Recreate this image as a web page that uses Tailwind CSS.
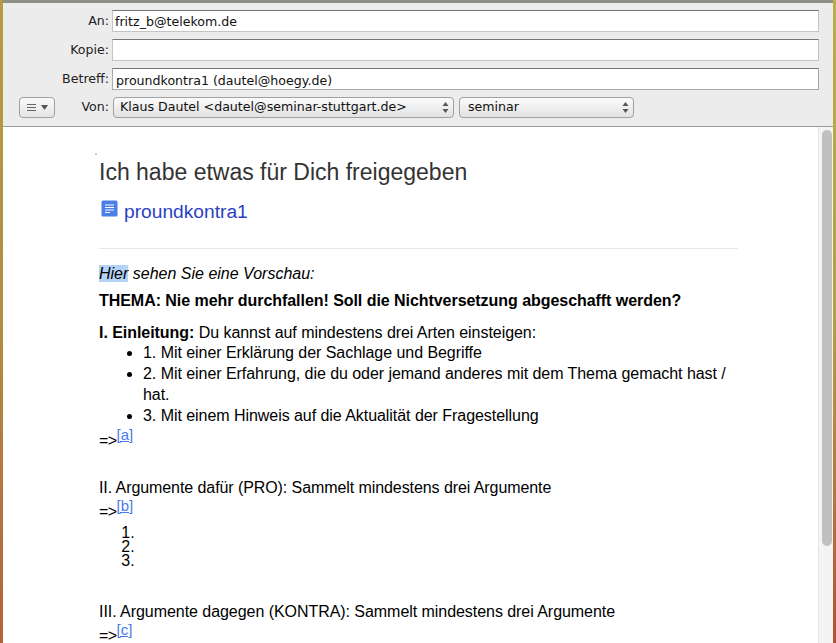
<!doctype html>
<html lang="de"><head><meta charset="utf-8"><title>Mail</title>
<script src="https://cdn.jsdelivr.net/npm/@tailwindcss/browser@4"></script></head>
<body class="w-[836px] h-[643px] overflow-hidden bg-white">
<div class="flex w-[836px] h-[643px] overflow-hidden">
  <div class="w-[3px] shrink-0 bg-gradient-to-b from-[#b79a45] via-[#b08f40] to-[#b5603a]"></div>
  <div class="flex-1 flex flex-col min-w-0 font-['DejaVu_Sans',sans-serif] text-[12.6px] text-[#111]">
    <header class="h-[127px] shrink-0 bg-[#ececec] border-t-[3px] border-b border-t-[#8f8f8a] border-b-[#9a9a9a] pt-[7px] pl-[16px] pr-[14px] flex flex-col">
      <div class="flex items-center h-[22px]">
        <label class="w-[93px] text-right text-[#222] pr-[3px]">An:</label>
        <div class="flex-1 h-[22px] bg-white border border-[#c4c4c4] border-t-[#777] px-[2px] leading-[21px]">fritz_b@telekom.de</div>
      </div>
      <div class="flex items-center h-[22px] mt-[7px]">
        <label class="w-[93px] text-right text-[#222] pr-[3px]">Kopie:</label>
        <div class="flex-1 h-[22px] bg-white border border-[#c4c4c4] border-t-[#777] px-[3px]"></div>
      </div>
      <div class="flex items-center h-[22px] mt-[7px]">
        <label class="w-[93px] text-right text-[#222] pr-[3px]">Betreff:</label>
        <div class="flex-1 h-[22px] bg-white border border-[#a8a8a8] border-t-[#777] px-[3px] leading-[23px]">proundkontra1 (dautel@hoegy.de)</div>
      </div>
      <div class="flex items-center h-[21px] mt-[7px]">
        <button class="w-[36px] h-[21px] rounded-[4px] border border-[#a0a0a0] bg-gradient-to-b from-[#fafafa] to-[#e4e4e4] flex items-center justify-center gap-[5px]">
          <svg width="9" height="7" viewBox="0 0 9 7"><path d="M0 .5h9M0 3.5h9M0 6.5h9" stroke="#666" stroke-width="1"/></svg>
          <svg width="7" height="5" viewBox="0 0 7 5"><path d="M0 0h7L3.5 5z" fill="#555"/></svg>
        </button>
        <label class="w-[57px] text-right text-[#222] pr-[3px]">Von:</label>
        <div class="w-[341px] h-[21px] ml-[1px] rounded-[4px] border border-[#a0a0a0] bg-gradient-to-b from-[#fbfbfb] to-[#e2e2e2] flex items-center justify-between pl-[6px] pr-[4px]">
          <span>Klaus Dautel &lt;dautel@seminar-stuttgart.de&gt;</span>
          <svg width="7" height="11" viewBox="0 0 7 11"><path d="M3.5 0L6.5 4H.5zM3.5 11L.5 7h6z" fill="#555"/></svg>
        </div>
        <div class="w-[175px] h-[21px] ml-[5px] rounded-[4px] border border-[#a0a0a0] bg-gradient-to-b from-[#fbfbfb] to-[#e2e2e2] flex items-center justify-between pl-[8px] pr-[4px]">
          <span>seminar</span>
          <svg width="7" height="11" viewBox="0 0 7 11"><path d="M3.5 0L6.5 4H.5zM3.5 11L.5 7h6z" fill="#555"/></svg>
        </div>
      </div>
    </header>
    <div class="flex-1 flex min-h-0">
      <main class="relative flex-1 min-w-0 overflow-hidden pl-[96px] pr-[80px] pt-[31px] font-['Liberation_Sans',Arial,sans-serif] text-[16px] leading-[21px] tracking-[-0.05px] text-black">
        <span class="absolute left-[92px] top-[26px] w-[2px] h-[2px] bg-[#cfcfcf]"></span>
        <h1 class="text-[23px] leading-[28px] tracking-normal text-[#333]">Ich habe etwas für Dich freigegeben</h1>
        <div class="flex items-start mt-[14px] h-[26px]">
          <svg class="ml-[2px]" width="17" height="17" viewBox="0 0 17 17"><rect x=".5" y=".5" width="16" height="16" rx="1.5" fill="#4a7ee8"/><path d="M4 5h9M4 7.5h9M4 10h9M4 12.5h5" stroke="#fff" stroke-width="1"/></svg>
          <a class="ml-[6px] text-[19.2px] leading-[24px] tracking-normal text-[#2a3fc4]">proundkontra1</a>
        </div>
        <hr class="mt-[22px] border-t border-[#e8e8e8]">
        <p class="mt-[14px] italic tracking-normal"><span class="bg-[#b4d3f7]">Hier</span> sehen Sie eine Vorschau:</p>
        <p class="mt-[6px] font-bold">THEMA: Nie mehr durchfallen! Soll die Nichtversetzung abgeschafft werden?</p>
        <p class="mt-[11px]"><b>I. Einleitung:</b> Du kannst auf mindestens drei Arten einsteigen:</p>
        <ul class="list-disc pl-[44px] -mt-[1px]">
          <li>1. Mit einer Erklärung der Sachlage und Begriffe</li>
          <li>2. Mit einer Erfahrung, die du oder jemand anderes mit dem Thema gemacht hast / hat.</li>
          <li>3. Mit einem Hinweis auf die Aktualität der Fragestellung</li>
        </ul>
        <p class="h-[24px] mt-[4px] tracking-[-0.6px]">=&gt;<sup class="text-[15px] tracking-normal text-[#4a7ae8] underline leading-none -top-[6px]">[a]</sup></p>
        <p class="mt-[23px] tracking-[-0.08px]">II. Argumente dafür (PRO): Sammelt mindestens drei Argumente</p>
        <p class="h-[24px] mt-[3px] tracking-[-0.6px]">=&gt;<sup class="text-[15px] tracking-normal text-[#4a7ae8] underline leading-none -top-[6px]">[b]</sup></p>
        <ol class="list-decimal pl-[40px] leading-[14px] mt-[1px]">
          <li></li><li></li><li></li>
        </ol>
        <p class="mt-[33px]">III. Argumente dagegen (KONTRA): Sammelt mindestens drei Argumente</p>
        <p class="h-[24px] mt-[3px] tracking-[-0.6px]">=&gt;<sup class="text-[15px] tracking-normal text-[#4a7ae8] underline leading-none -top-[6px]">[c]</sup></p>
      </main>
      <div class="w-[15px] shrink-0 bg-[#f4f4f4] border-l border-[#e6e6e6] pt-[3px] pl-[3px]">
        <div class="w-[10px] h-[416px] rounded-full bg-[#c0c0c0]"></div>
      </div>
    </div>
  </div>
  <div class="w-[3px] shrink-0 bg-gradient-to-b from-[#b8ae4a] via-[#b2a044] to-[#b04f38]"></div>
</div>
</body></html>
